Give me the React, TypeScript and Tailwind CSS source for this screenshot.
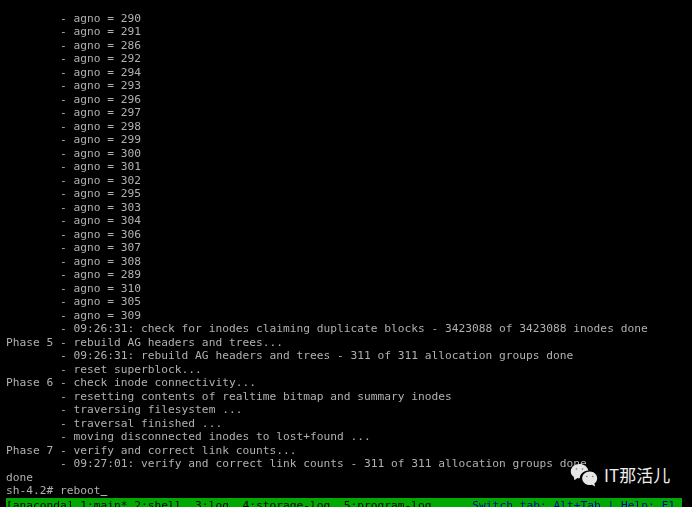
const agnos = [290, 291, 286, 292, 294, 293, 296, 297, 298, 299, 300, 301, 302, 295, 303, 304, 306, 307, 308, 289, 310, 305, 309]

const lines = [
  ...agnos.map((n) => `        - agno = ${n}`),
  '        - 09:26:31: check for inodes claiming duplicate blocks - 3423088 of 3423088 inodes done',
  'Phase 5 - rebuild AG headers and trees...',
  '        - 09:26:31: rebuild AG headers and trees - 311 of 311 allocation groups done',
  '        - reset superblock...',
  'Phase 6 - check inode connectivity...',
  '        - resetting contents of realtime bitmap and summary inodes',
  '        - traversing filesystem ...',
  '        - traversal finished ...',
  '        - moving disconnected inodes to lost+found ...',
  'Phase 7 - verify and correct link counts...',
  '        - 09:27:01: verify and correct link counts - 311 of 311 allocation groups done',
  'done',
]

function WeChatIcon() {
  return (
    <svg viewBox="0 0 28 24" className="h-[24px] w-[28px]">
      <path
        fill="#e6e6e6"
        d="M9.500 1C4.500 1 .8 4.200.8 8.400c0 2.200 1 4.100 2.900 5.400l.8 3.400 3-2.300c.8.200 1.500.3 2.300.3 0-4.200 3.700-7.600 8.600-7.800C17.300 3.600 13.800 1 9.500 1z"
      />
      <path
        fill="#e6e6e6"
        d="M27.200 15.200c0-3.900-3.400-6.800-7.400-6.800-4.200 0-7.600 3-7.600 6.800 0 3.800 3.400 6.800 7.600 6.800.7 0 1.400-.1 2.100-.3l3.200 1.800-.7-3c1.800-1.300 2.800-3.100 2.800-5.300z"
      />
      <circle cx="6.500" cy="6" r=".8" fill="#777" />
      <circle cx="12.500" cy="6" r=".8" fill="#777" />
      <circle cx="16.800" cy="13.500" r=".8" fill="#777" />
      <circle cx="22.800" cy="13.500" r=".8" fill="#777" />
    </svg>
  )
}

export default function App() {
  return (
    <div className="relative h-[507px] w-[692px] overflow-hidden bg-black pl-[6px] pt-[11.5px] font-['DejaVu_Sans_Mono',monospace] text-[11.23px] leading-[13.5px] text-[#b0b0b0]">
      <div className="blur-[0.3px]">
        {lines.map((line, i) => (
          <div key={i} className="h-[13.5px] whitespace-pre">
            {line}
          </div>
        ))}
        <div className="h-[13.5px] whitespace-pre">
          sh-4.2# reboot<span className="underline">&nbsp;</span>
        </div>
        <div className="flex h-[13.5px] w-[676px] justify-between whitespace-pre bg-[#00aa00] pt-[1px]">
          <span className="text-black">[anaconda] 1:main* 2:shell  3:log  4:storage-log  5:program-log</span>
          <span className="pr-[7px] text-[#0000aa]">Switch tab: Alt+Tab | Help: F1</span>
        </div>
      </div>
      <div className="absolute left-[570px] top-[463px] flex items-center gap-[6px]">
        <WeChatIcon />
        <span className="font-['Noto_Sans_CJK_SC',sans-serif] text-[17px] leading-[24px] text-[#eeeeee]">IT那活儿</span>
      </div>
    </div>
  )
}
